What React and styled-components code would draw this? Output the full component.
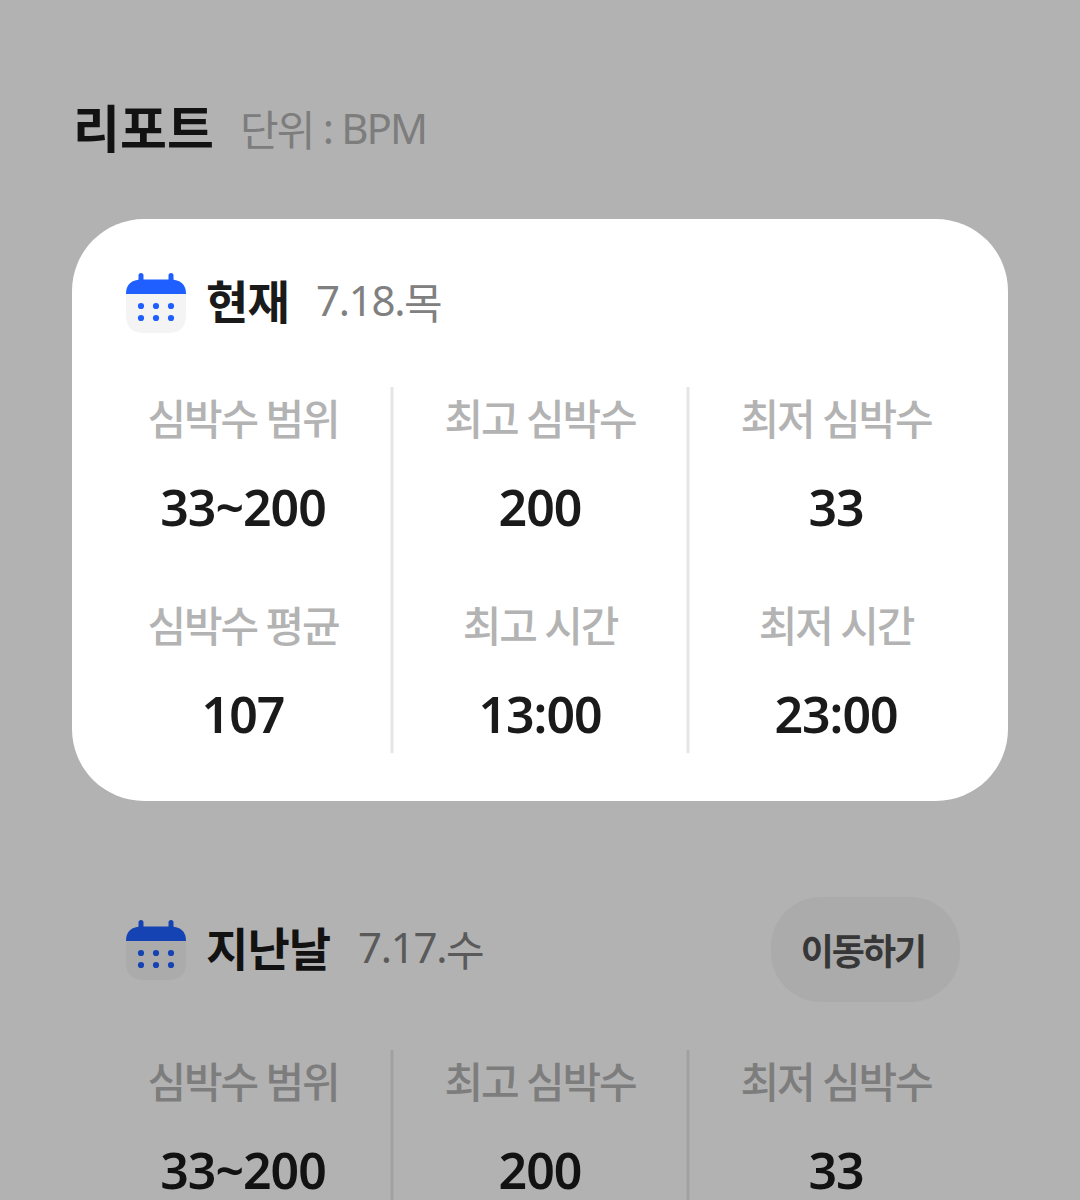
import React from "react";
import styled, { createGlobalStyle, css } from "styled-components";

const GlobalStyle = createGlobalStyle`
  *, *::before, *::after { box-sizing: border-box; }
  html, body { margin: 0; background: #b2b2b2; }
  body { font-family: "Noto Sans", "Noto Sans CJK KR", sans-serif; }
`;

const light = {
  surface: "#ffffff", ink: "#1a1a1a", date: "#808080", label: "#b3b3b3",
  line: "#e6e6e6", edge: "#f2f2f2", blue: "#1f5fff", paper: "#f4f4f4",
};
const dimmed = {
  surface: "transparent", ink: "#121212", date: "#5a5a5a", label: "#7d7d7d",
  line: "#a1a1a1", edge: "#aaaaaa", blue: "#1643b3", paper: "#ababab",
};

const Page = styled.main`
  width: 1080px;
  height: 1200px;
  padding: 0 72px;
  overflow: hidden;
  background: #b2b2b2;
`;

const PageHeader = styled.header`
  display: flex;
  align-items: center;
  height: 219px;
  padding-top: 37px;
`;

const Title = styled.h1`
  margin: 0 0 0 1px;
  width: 167px;
  font-size: 51px;
  line-height: 72px;
  font-weight: 700;
  letter-spacing: 0.1px;
  white-space: nowrap;
  color: #121212;
`;

const Unit = styled.span`
  padding-top: 4px;
  font-size: 42px;
  line-height: 72px;
  letter-spacing: -1.8px;
  white-space: nowrap;
  color: #7d7d7d;
`;

/* Latin runs sit slightly above the Hangul baseline */
const Raised = styled.span`
  line-height: 1;
  vertical-align: ${(p) => p.$by}px;
  letter-spacing: ${(p) => p.$spacing}px;
`;

const Section = styled.section`
  padding: 48px 24px;
  border-radius: 72px;
  background: ${(p) => p.$tone.surface};
`;

const SectionHeader = styled.div`
  display: flex;
  align-items: center;
  height: ${(p) => p.$height}px;
  margin-bottom: 48px;
  padding: 0 24px 0 30px;
`;

const Day = styled.h2`
  margin: 0 0 4px 20px;
  width: ${(p) => p.$width}px;
  font-size: 46px;
  line-height: 72px;
  font-weight: 700;
  letter-spacing: -0.9px;
  white-space: nowrap;
  color: ${(p) => p.$tone.ink};
`;

const DateText = styled.span`
  font-size: 42px;
  line-height: 72px;
  letter-spacing: -1.5px;
  white-space: nowrap;
  color: ${(p) => p.$tone.date};
`;

const MoveButton = styled.button`
  width: 189px;
  height: 105px;
  margin-left: auto;
  padding: 0 5px 0 0;
  border: 0;
  border-radius: 50px;
  background: #ababab;
  color: #373737;
  font: inherit;
  font-size: 36px;
  font-weight: 700;
  letter-spacing: -2px;
`;

const Columns = styled.div`
  display: grid;
  grid-template-columns: 294px 4px 292px 4px 292px;
`;

/* 3px hairline centred in a 4px track, with half-strength edges */
const Divider = styled.div`
  background: ${(p) => p.$tone.line};
  border: solid ${(p) => p.$tone.edge};
  border-width: 0 1px;
`;

const Column = styled.dl`
  display: flex;
  flex-direction: column;
  gap: 60px;
  margin: 0;
  padding-bottom: 12px;
`;

const Metric = styled.div`
  display: flex;
  flex-direction: column;
  align-items: center;
  gap: 34px;
`;

const metricText = css`
  margin: 0;
  white-space: nowrap;
`;

const Label = styled.dt`
  ${metricText}
  font-size: 42px;
  line-height: 59px;
  letter-spacing: -2.1px;
  word-spacing: 1px;
  font-family: "Noto Sans CJK KR", sans-serif;
  font-weight: 500;
  color: ${(p) => p.$tone.label};
`;

const Value = styled.dd`
  ${metricText}
  font-size: 50px;
  line-height: 54px;
  font-weight: 600;
  letter-spacing: -1px;
  color: ${(p) => p.$tone.ink};
`;

const rangeRow = [
  ["심박수 범위", "33~200"],
  ["최고 심박수", "200"],
  ["최저 심박수", "33"],
];
const averageRow = [
  ["심박수 평균", "107"],
  ["최고 시간", "13:00"],
  ["최저 시간", "23:00"],
];

function CalendarIcon({ tone }) {
  return (
    <svg width="60" height="60" viewBox="0 0 60 60" aria-hidden="true">
      <path d="M0 20H60V42Q60 60 42 60H18Q0 60 0 42Z" fill={tone.paper} />
      <path d="M0 21Q0 6.5 16 6.5H44Q60 6.5 60 21Z" fill={tone.blue} />
      <path d="M15 2.5V9M45 2.5V9" stroke={tone.blue} strokeWidth="5" strokeLinecap="round" />
      {[33, 45].map((y) =>
        [15, 30, 45].map((x) => <circle key={`${x}-${y}`} cx={x} cy={y} r="3.1" fill={tone.blue} />)
      )}
    </svg>
  );
}

function Report({ tone, day, dayWidth, date, weekday, headerHeight, action, rows }) {
  return (
    <Section $tone={tone}>
      <SectionHeader $height={headerHeight}>
        <CalendarIcon tone={tone} />
        <Day $tone={tone} $width={dayWidth}>{day}</Day>
        <DateText $tone={tone}>
          <Raised $by={3} $spacing={-1.3}>{date}</Raised>
          {weekday}
        </DateText>
        {action && <MoveButton type="button">{action}</MoveButton>}
      </SectionHeader>
      <Columns>
        {rows[0].map((_, i) => (
          <React.Fragment key={i}>
            {i > 0 && <Divider $tone={tone} />}
            <Column>
              {rows.map((row) => (
                <Metric key={row[i][0]}>
                  <Label $tone={tone}>{row[i][0]}</Label>
                  <Value $tone={tone}>{row[i][1]}</Value>
                </Metric>
              ))}
            </Column>
          </React.Fragment>
        ))}
      </Columns>
    </Section>
  );
}

const Previous = styled.div`
  margin-top: 48px;
`;

export default function App() {
  return (
    <>
      <GlobalStyle />
      <Page>
        <PageHeader>
          <Title>리포트</Title>
          <Unit>단위 <Raised $by={2} $spacing={-1.9}>: BPM</Raised></Unit>
        </PageHeader>
        <Report
          tone={light} day="현재" dayWidth={110} date="7.18." weekday="목"
          headerHeight={72} rows={[rangeRow, averageRow]}
        />
        <Previous>
          <Report
            tone={dimmed} day="지난날" dayWidth={152} date="7.17." weekday="수"
            headerHeight={105} action="이동하기" rows={[rangeRow]}
          />
        </Previous>
      </Page>
    </>
  );
}
